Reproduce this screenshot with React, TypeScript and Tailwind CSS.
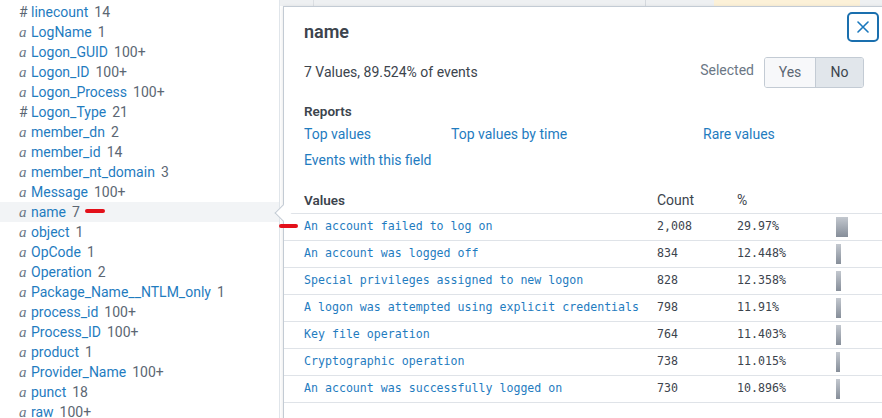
import React from "react";

const sans = "font-['Roboto',_'Liberation_Sans',_sans-serif]";
const mono = "font-['DejaVu_Sans_Mono',_'Liberation_Mono',_monospace]";

const fields: [string, string, string][] = [
  ["#", "linecount", "14"],
  ["a", "LogName", "1"],
  ["a", "Logon_GUID", "100+"],
  ["a", "Logon_ID", "100+"],
  ["a", "Logon_Process", "100+"],
  ["#", "Logon_Type", "21"],
  ["a", "member_dn", "2"],
  ["a", "member_id", "14"],
  ["a", "member_nt_domain", "3"],
  ["a", "Message", "100+"],
  ["a", "name", "7"],
  ["a", "object", "1"],
  ["a", "OpCode", "1"],
  ["a", "Operation", "2"],
  ["a", "Package_Name__NTLM_only", "1"],
  ["a", "process_id", "100+"],
  ["a", "Process_ID", "100+"],
  ["a", "product", "1"],
  ["a", "Provider_Name", "100+"],
  ["a", "punct", "18"],
  ["a", "raw", "100+"],
];

const values: [string, string, string, number][] = [
  ["An account failed to log on", "2,008", "29.97%", 29.97],
  ["An account was logged off", "834", "12.448%", 12.448],
  ["Special privileges assigned to new logon", "828", "12.358%", 12.358],
  ["A logon was attempted using explicit credentials", "798", "11.91%", 11.91],
  ["Key file operation", "764", "11.403%", 11.403],
  ["Cryptographic operation", "738", "11.015%", 11.015],
  ["An account was successfully logged on", "730", "10.896%", 10.896],
];

function FieldRow({ type, name, count }: { type: string; name: string; count: string }) {
  const active = name === "name";
  return (
    <div className={`h-[20px] flex items-center pl-[19px] ${active ? "bg-[#f2f4f6]" : ""}`}>
      {type === "#" ? (
        <span className="w-[12px] text-[14px] text-[#5c6773]">#</span>
      ) : (
        <span className="w-[12px] text-[15px] italic text-[#6b7785] font-['Liberation_Serif',_serif] leading-none">a</span>
      )}
      <span className="text-[14px] text-[#1f7cbf]">{name}</span>
      <span className="ml-[6px] text-[14px] text-[#5c6773]">{count}</span>
    </div>
  );
}

export default function App() {
  return (
    <div className={`relative w-[882px] h-[418px] overflow-hidden bg-white flex ${sans}`}>
      {/* Field sidebar */}
      <div className="w-[280px] shrink-0 border-r border-[#e1e6eb] pt-[2px]">
        {fields.map(([t, n, c]) => (
          <FieldRow key={n} type={t} name={n} count={c} />
        ))}
      </div>

      {/* Page behind the popover */}
      <div className="flex-1 bg-white">
        <div className="h-[6px] bg-[#eef0f2] flex">
          <div className="w-[34px] border-r border-[#dcdfe3]" />
          <div className="w-[332px] border-r border-[#d5d9de]" />
          <div className="w-[68px]" />
          <div className="w-[146px] bg-[#fcf1d8]" />
        </div>
      </div>

      {/* Popover */}
      <div className="absolute left-[283px] top-[6px] w-[602px] h-[430px] bg-white border border-[#c3cbd4] shadow-[0_1px_4px_rgba(0,0,0,0.12)]">
        {/* notch */}
        <div className="absolute left-[-7px] top-[200px] w-[12px] h-[12px] bg-white border-l border-b border-[#c3cbd4] rotate-45" />

        <button className="absolute top-[5px] right-[5px] w-[32px] h-[30px] border-2 border-[#1a6fae] rounded-[5px] flex items-center justify-center bg-white">
          <svg width="12" height="12" viewBox="0 0 12 12" fill="none" stroke="#1a78bd" strokeWidth="1.6" strokeLinecap="round">
            <path d="M1 1 L11 11 M11 1 L1 11" />
          </svg>
        </button>

        <div className="px-5 pt-[13px]">
          <h2 className="text-[18px] leading-[24px] font-semibold text-[#3c444d]">name</h2>

          <div className="mt-[13px] h-[31px] flex items-center justify-between">
            <span className="text-[14px] text-[#3c444d]">7 Values, 89.524% of events</span>
            <div className="flex items-center gap-[10px]">
              <span className="text-[14px] text-[#6b7785] mb-[4px]">Selected</span>
              <div className="flex h-[31px] border border-[#c3cbd4] rounded-[3px] overflow-hidden text-[14px]">
                <span className="w-[51px] flex items-center justify-center bg-[#f7f8fa] text-[#5c6773] border-r border-[#c3cbd4]">Yes</span>
                <span className="w-[47px] flex items-center justify-center bg-[#e1e6eb] text-[#3c444d]">No</span>
              </div>
            </div>
          </div>

          <h3 className="mt-[14px] text-[13.5px] leading-[18px] font-semibold text-[#3c444d]">Reports</h3>
          <div className="mt-[5px] grid grid-cols-[147px_252px_1fr] gap-y-[8px] text-[14px] leading-[18px] text-[#1f7cbf]">
            <span>Top values</span>
            <span>Top values by time</span>
            <span>Rare values</span>
            <span>Events with this field</span>
          </div>
        </div>

        {/* Values table */}
        <div className="mt-[18px]">
          <div className="h-[27px] flex items-center border-b border-[#dfe3e8] text-[14px] text-[#3c444d]">
            <span className="w-[373px] pl-5 text-[13.5px] font-semibold">Values</span>
            <span className="w-[80px]">Count</span>
            <span>%</span>
          </div>
          {values.map(([v, c, p, n]) => (
            <div key={v} className={`h-[27px] flex items-center border-b border-[#dfe3e8] text-[11.6px] ${mono}`}>
              <span className="w-[373px] pl-5 text-[#1f7cbf] whitespace-nowrap">{v}</span>
              <span className="w-[80px] text-[#3c444d]">{c}</span>
              <span className="w-[99px] text-[#3c444d]">{p}</span>
              <span
                className="h-[20px] bg-gradient-to-b from-[#c3c8cf] to-[#868e99]"
                style={{ width: `${Math.round((n / 29.97) * 12)}px` }}
              />
            </div>
          ))}
        </div>
      </div>

      {/* red annotation marks */}
      <div className="absolute left-[85px] top-[209px] w-[20px] h-[4px] rounded-full bg-[#e3101a]" />
      <div className="absolute left-[279px] top-[224px] w-[19px] h-[4px] rounded-full bg-[#e3101a]" />
    </div>
  );
}
